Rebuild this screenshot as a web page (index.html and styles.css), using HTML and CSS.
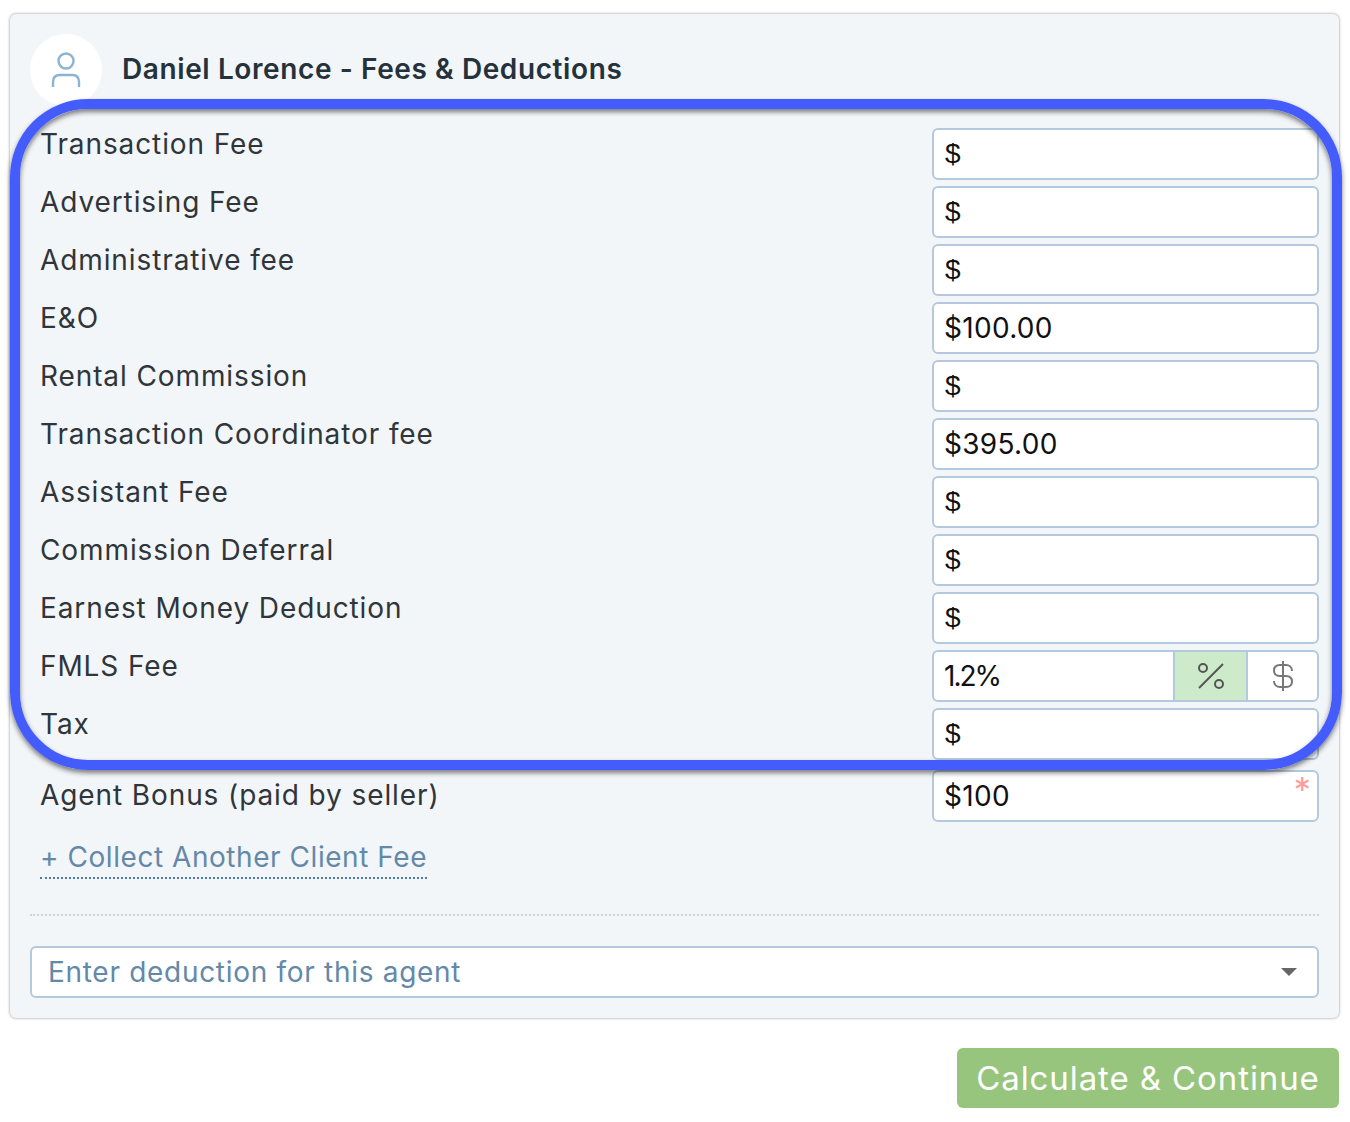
FILE: index.html
```html
<!DOCTYPE html>
<html lang="en">
<head>
    <meta charset="UTF-8">
    <meta name="viewport" content="width=device-width, initial-scale=1.0">
    <title>Fees &amp; Deductions</title>
    <link rel="stylesheet" href="styles.css">
</head>
<body>
    <div class="page">
        <div class="card">
            <div class="card-head">
                <div class="avatar">
                    <svg width="32" height="36" viewBox="0 0 32 36" fill="none" stroke="#8ab4d4" stroke-width="2.4">
                        <circle cx="16" cy="9" r="7.5"/>
                        <path d="M3 35V30Q3 23 10 23H22Q29 23 29 30V35"/>
                    </svg>
                </div>
                <h2 class="card-title">Daniel Lorence - Fees &amp; Deductions</h2>
            </div>

            <div class="form-group">
                <label>Transaction Fee</label>
                <div class="field"><span class="plain">$</span></div>
            </div>
            <div class="form-group">
                <label>Advertising Fee</label>
                <div class="field"><span class="plain">$</span></div>
            </div>
            <div class="form-group">
                <label>Administrative fee</label>
                <div class="field"><span class="plain">$</span></div>
            </div>
            <div class="form-group">
                <label>E&amp;O</label>
                <div class="field">$100.00</div>
            </div>
            <div class="form-group">
                <label>Rental Commission</label>
                <div class="field"><span class="plain">$</span></div>
            </div>
            <div class="form-group">
                <label>Transaction Coordinator fee</label>
                <div class="field">$395.00</div>
            </div>
            <div class="form-group">
                <label>Assistant Fee</label>
                <div class="field"><span class="plain">$</span></div>
            </div>
            <div class="form-group">
                <label>Commission Deferral</label>
                <div class="field"><span class="plain">$</span></div>
            </div>
            <div class="form-group">
                <label>Earnest Money Deduction</label>
                <div class="field"><span class="plain">$</span></div>
            </div>
            <div class="form-group">
                <label>FMLS Fee</label>
                <div class="field field-toggle">
                    <div class="toggle-value">1.2%</div>
                    <div class="toggle-btn active">
                        <svg width="28" height="28" viewBox="0 0 28 28" fill="none" stroke="#555" stroke-width="2">
                            <path d="M2 26L26 2"/>
                            <circle cx="6" cy="6" r="4"/>
                            <circle cx="22" cy="22" r="4"/>
                        </svg>
                    </div>
                    <div class="toggle-btn">
                        <svg width="22" height="30" viewBox="0 0 22 30" fill="none" stroke="#777" stroke-width="2">
                            <path d="M11 0V30"/>
                            <path d="M20 10C20 6 17 4 14 4H8C4 4 2 6.500 2 9.500S4 15 8 15H14C18 15 20 17.500 20 20.500S18 26 14 26H8C5 26 2 24 2 20"/>
                        </svg>
                    </div>
                </div>
            </div>
            <div class="form-group">
                <label>Tax</label>
                <div class="field"><span class="plain">$</span></div>
            </div>
            <div class="form-group form-group-bonus">
                <label>Agent Bonus (paid by seller)</label>
                <div class="field">$100<span class="required">*</span></div>
            </div>

            <a class="add-link" href="#">+ Collect Another Client Fee</a>

            <div class="divider"></div>

            <div class="select-box">
                <span>Enter deduction for this agent</span>
                <span class="caret"></span>
            </div>
        </div>

        <div class="actions">
            <button type="button">Calculate &amp; Continue</button>
        </div>

        <div class="highlight"></div>
    </div>
</body>
</html>
```

FILE: styles.css
```css
* {
    box-sizing: border-box;
}
body {
    margin: 0;
    font-family: Inter, "Open Sans", sans-serif;
    background: #fff;
}
.page {
    position: relative;
    width: 1350px;
    height: 1122px;
    padding: 14px 10px 0;
}
.card {
    width: 1329px;
    height: 1004px;
    padding: 20px 20px 0;
    background: #f3f6f9;
    border-radius: 6px;
    box-shadow: 0 0 3px rgba(0, 0, 0, 0.45);
}
.card-head {
    display: flex;
    align-items: center;
    gap: 20px;
    height: 72px;
    margin-bottom: 22px;
}
.avatar {
    display: flex;
    align-items: center;
    justify-content: center;
    width: 72px;
    height: 72px;
    border-radius: 50%;
    background: #fff;
}
.card-title {
    margin: 0 0 2px;
    font-size: 28px;
    font-weight: 600;
    letter-spacing: 0.6px;
    color: #25323c;
}
.form-group {
    display: flex;
    justify-content: space-between;
    margin-bottom: 6px;
}
.form-group-bonus {
    margin-top: 10px;
}
label {
    padding-left: 10px;
    font-size: 28px;
    line-height: 32px;
    letter-spacing: 0.9px;
    color: #2f3539;
}
.form-group-bonus label {
    padding-top: 9px;
}
.field {
    position: relative;
    width: 387px;
    height: 52px;
    padding-left: 10px;
    border: 2px solid #b5c9dc;
    border-radius: 6px;
    background: #fff;
    font-size: 28px;
    line-height: 48px;
    letter-spacing: 0.3px;
    color: #111;
}
.plain {
    margin-left: 1px;
    vertical-align: 1px;
    font-family: "Liberation Sans", sans-serif;
}
.required {
    position: absolute;
    top: 0;
    right: 6px;
    font-size: 34px;
    line-height: 36px;
    color: #ff9c9c;
}
.field-toggle {
    display: flex;
    padding-left: 0;
}
.toggle-value {
    flex: 1;
    padding-left: 10px;
    letter-spacing: -2px;
}
.toggle-btn {
    display: flex;
    align-items: center;
    justify-content: center;
    width: 73px;
    border-left: 2px solid #b5c9dc;
}
.toggle-btn:last-child {
    width: 71px;
}
.toggle-btn.active {
    background: #cdeacb;
}
.add-link {
    display: inline-block;
    margin: 9px 0 0 10px;
    border-bottom: 2px dotted #4f7ea3;
    font-size: 28px;
    line-height: 40px;
    letter-spacing: 0.55px;
    color: #6489a8;
    text-decoration: none;
}
.divider {
    margin-top: 35px;
    border-top: 2px dotted #cfd3d6;
}
.select-box {
    display: flex;
    align-items: center;
    justify-content: space-between;
    height: 52px;
    margin-top: 30px;
    padding: 0 20px 0 16px;
    border: 2px solid #b5c9dc;
    border-radius: 6px;
    background: #fff;
    font-size: 28px;
    letter-spacing: 0.7px;
    color: #6489a8;
}
.caret {
    border-top: 8px solid #666;
    border-left: 8px solid transparent;
    border-right: 8px solid transparent;
}
.actions {
    display: flex;
    justify-content: flex-end;
    margin-top: 30px;
    width: 1329px;
}
button {
    width: 382px;
    height: 60px;
    padding: 0;
    border: none;
    border-radius: 6px;
    background: #97c57d;
    font-family: inherit;
    font-size: 33px;
    letter-spacing: 0.9px;
    color: #fff;
}
.highlight {
    position: absolute;
    top: 99px;
    left: 10px;
    width: 1332px;
    height: 671px;
    border: 10px solid #445cfb;
    border-radius: 78px;
    box-shadow: 0 3px 5px rgba(0, 0, 0, 0.5), inset 0 3px 5px rgba(0, 0, 0, 0.5);
    pointer-events: none;
}
```
